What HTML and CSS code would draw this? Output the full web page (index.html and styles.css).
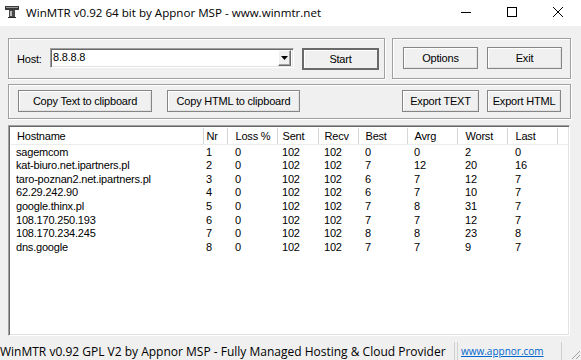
FILE: index.html
```html
<!DOCTYPE html>
<html>
<head>
<meta charset="utf-8">
<title>WinMTR</title>
<link rel="stylesheet" href="styles.css">
</head>
<body>
<div class="titlebar">
  <svg class="appicon" width="14" height="12" viewBox="0 0 14 12">
    <rect x="0" y="0" width="14" height="4" fill="#3a3a3a"/>
    <rect x="1" y="1" width="12" height="1" fill="#9a9a9a"/>
    <rect x="4" y="4" width="6" height="7" fill="#4a4a4a"/>
    <rect x="5" y="5" width="2" height="5" fill="#bdbdbd"/>
    <rect x="3" y="11" width="8" height="1" fill="#2a2a2a"/>
  </svg>
  <span class="title">WinMTR v0.92 64 bit by Appnor MSP - www.winmtr.net</span>
  <div class="winctl">
    <span class="ctl"><svg width="10" height="10" viewBox="0 0 10 10"><line x1="0" y1="5.5" x2="10" y2="5.5" stroke="#000" stroke-width="1"/></svg></span>
    <span class="ctl"><svg width="10" height="10" viewBox="0 0 10 10"><rect x="0.5" y="0.5" width="9" height="9" fill="none" stroke="#000" stroke-width="1"/></svg></span>
    <span class="ctl"><svg width="10" height="10" viewBox="0 0 10 10"><path d="M0 0L10 10M10 0L0 10" stroke="#000" stroke-width="1"/></svg></span>
  </div>
</div>
<div class="app">
  <div class="row1">
    <div class="group host-group">
      <span class="lbl">Host:</span>
      <div class="combo">
        <span class="combo-text">8.8.8.8</span>
        <span class="combo-btn"><svg width="7" height="4" viewBox="0 0 7 4"><path d="M0 0H7L3.5 4Z" fill="#000"/></svg></span>
      </div>
      <button class="btn btn-default start">Start</button>
    </div>
    <div class="group opt-group">
      <button class="btn opt">Options</button>
      <button class="btn opt">Exit</button>
    </div>
  </div>
  <div class="group row2">
    <button class="btn copy-text">Copy Text to clipboard</button>
    <button class="btn copy-html">Copy HTML to clipboard</button>
    <span class="spacer"></span>
    <button class="btn exp-text">Export TEXT</button>
    <button class="btn exp-html">Export HTML</button>
  </div>
  <div class="list">
    <table class="grid">
      <colgroup>
        <col class="c-host"><col class="c-nr"><col class="c-loss"><col class="c-sent"><col class="c-recv"><col class="c-best"><col class="c-avrg"><col class="c-worst"><col class="c-last"><col class="c-fill">
      </colgroup>
      <thead>
        <tr><th>Hostname</th><th>Nr</th><th>Loss %</th><th>Sent</th><th>Recv</th><th>Best</th><th>Avrg</th><th>Worst</th><th>Last</th><th></th></tr>
      </thead>
      <tbody>
        <tr><td>sagemcom</td><td>1</td><td>0</td><td>102</td><td>102</td><td>0</td><td>0</td><td>2</td><td>0</td><td></td></tr>
        <tr><td>kat-biuro.net.ipartners.pl</td><td>2</td><td>0</td><td>102</td><td>102</td><td>7</td><td>12</td><td>20</td><td>16</td><td></td></tr>
        <tr><td>taro-poznan2.net.ipartners.pl</td><td>3</td><td>0</td><td>102</td><td>102</td><td>6</td><td>7</td><td>12</td><td>7</td><td></td></tr>
        <tr><td>62.29.242.90</td><td>4</td><td>0</td><td>102</td><td>102</td><td>6</td><td>7</td><td>10</td><td>7</td><td></td></tr>
        <tr><td>google.thinx.pl</td><td>5</td><td>0</td><td>102</td><td>102</td><td>7</td><td>8</td><td>31</td><td>7</td><td></td></tr>
        <tr><td>108.170.250.193</td><td>6</td><td>0</td><td>102</td><td>102</td><td>7</td><td>7</td><td>12</td><td>7</td><td></td></tr>
        <tr><td>108.170.234.245</td><td>7</td><td>0</td><td>102</td><td>102</td><td>8</td><td>8</td><td>23</td><td>8</td><td></td></tr>
        <tr><td>dns.google</td><td>8</td><td>0</td><td>102</td><td>102</td><td>7</td><td>7</td><td>9</td><td>7</td><td></td></tr>
      </tbody>
    </table>
  </div>
</div>
<div class="statusbar">
  <span class="status-main">WinMTR v0.92 GPL V2 by Appnor MSP - Fully Managed Hosting &amp; Cloud Provider</span>
  <span class="status-link"><a href="#">www.appnor.com</a></span>
  <span class="grip">
    <svg width="12" height="12" viewBox="0 0 12 12">
      <path d="M11 3L3 11M11 7L7 11M11 11L11 11" stroke="#a0a0a0" stroke-width="1"/>
    </svg>
  </span>
</div>
</body>
</html>
```

FILE: styles.css
```css
* { box-sizing: border-box; }

html, body {
  margin: 0;
  padding: 0;
}

body {
  width: 581px;
  height: 360px;
  overflow: hidden;
  background: #f0f0f0;
  font-family: "Liberation Sans", Arial, sans-serif;
  font-size: 11px;
  color: #000;
  display: flex;
  flex-direction: column;
}

/* ---------- title bar ---------- */
.titlebar {
  height: 26px;
  background: #fff;
  display: flex;
  align-items: center;
  flex-shrink: 0;
}

.appicon {
  margin-left: 5px;
  margin-right: 7px;
  margin-top: -2px;
}

.title {
  font-family: "Open Sans", "Noto Sans", sans-serif;
  font-size: 11.6px;
  color: #000;
  margin-top: -2px;
}

.winctl {
  margin-left: auto;
  display: flex;
  height: 26px;
}

.ctl {
  width: 46px;
  height: 26px;
  display: flex;
  align-items: center;
  justify-content: center;
  margin-top: -1px;
}

/* ---------- client ---------- */
.app {
  padding: 12px 10px 0 8px;
  display: flex;
  flex-direction: column;
}

.group {
  border: 1px solid #a0a0a0;
  box-shadow: inset 1px 1px 0 #fff, 1px 1px 0 #fff;
}

.row1 {
  display: flex;
  gap: 7px;
  height: 41px;
}

.host-group {
  width: 377px;
  display: flex;
  align-items: center;
  padding-left: 8px;
  padding-top: 1px;
}

.lbl {
  width: 33px;
  letter-spacing: -0.2px;
  margin-top: -1px;
}

.combo {
  width: 244px;
  height: 20px;
  background: #fff;
  border-top: 1px solid #a0a0a0;
  border-left: 1px solid #a0a0a0;
  border-right: 1px solid #fff;
  border-bottom: 1px solid #fff;
  box-shadow: inset 1px 1px 0 #696969, inset -1px -1px 0 #e3e3e3;
  display: flex;
  align-items: center;
  padding: 0 2px 0 2px;
  margin-top: -2px;
}

.combo-text {
  flex: 1;
  letter-spacing: -0.2px;
  margin-top: -2px;
}

.combo-btn {
  width: 13px;
  height: 16px;
  background: #f0f0f0;
  border-top: 1px solid #fff;
  border-left: 1px solid #fff;
  border-right: 1px solid #696969;
  border-bottom: 1px solid #696969;
  box-shadow: inset -1px -1px 0 #a0a0a0;
  display: flex;
  align-items: center;
  justify-content: center;
}

.btn {
  font-family: "Liberation Sans", Arial, sans-serif;
  font-size: 11px;
  letter-spacing: -0.2px;
  color: #000;
  background: #f0f0f0;
  border: 1px solid #858585;
  box-shadow: inset 1px 1px 0 #fff, inset -1px -1px 0 #e3e3e3;
  height: 22px;
  padding: 0;
  margin: 0;
  border-radius: 0;
}

.btn-default {
  border: 1px solid #6a6a6a;
  box-shadow: inset 0 0 0 1px #6a6a6a, inset 2px 2px 0 #fff;
}

.start {
  width: 77px;
  margin-left: 8px;
}

.opt-group {
  width: 179px;
  display: flex;
  align-items: center;
  padding-left: 10px;
  gap: 9px;
  padding-top: 1px;
}

.opt {
  width: 75px;
  margin-top: -2px;
}

.row2 {
  margin-top: 5px;
  height: 35px;
  display: flex;
  align-items: flex-start;
  padding: 5px 9px 0 9px;
}

.copy-text { width: 134px; }
.copy-html { width: 133px; margin-left: 15px; }
.spacer { flex: 1; }
.exp-text { width: 77px; }
.exp-html { width: 74px; margin-left: 8px; }

/* ---------- list ---------- */
.list {
  margin-top: 6px;
  width: 562px;
  height: 211px;
  background: #fff;
  border-top: 1px solid #a0a0a0;
  border-left: 1px solid #a0a0a0;
  border-right: 1px solid #fff;
  border-bottom: 1px solid #fff;
  box-shadow: inset 1px 1px 0 #696969, inset -1px -1px 0 #e3e3e3;
  padding: 2px 2px 0 2px;
  overflow: hidden;
}

.grid {
  border-collapse: collapse;
  table-layout: fixed;
  width: 558px;
  letter-spacing: -0.2px;
}

.c-host { width: 192px; }
.c-nr { width: 24px; }
.c-loss { width: 50px; }
.c-sent { width: 41px; }
.c-recv { width: 40px; }
.c-best { width: 49px; }
.c-avrg { width: 50px; }
.c-worst { width: 50px; }
.c-last { width: 50px; }
.c-fill { width: 12px; }

.grid th {
  height: 16px;
  font-weight: normal;
  text-align: left;
  padding: 0;
  border-right: 1px solid #d6d6d6;
  border-bottom: 1px solid #ececec;
  white-space: nowrap;
  line-height: 14px;
}

.grid th:last-child { border-right: none; }

.grid td {
  height: 13.7px;
  line-height: 13px;
  padding: 0;
  white-space: nowrap;
  overflow: hidden;
}

.grid tbody tr:first-child td { padding-top: 1px; height: 14.7px; }

.grid th:nth-child(1) { padding-left: 6px; }
.grid td:nth-child(1) { padding-left: 5px; }
.grid th:nth-child(2), .grid td:nth-child(2) { padding-left: 3px; }
.grid th:nth-child(3), .grid td:nth-child(3) { padding-left: 8px; }
.grid th:nth-child(4), .grid td:nth-child(4) { padding-left: 5px; }
.grid th:nth-child(5), .grid td:nth-child(5) { padding-left: 6px; }
.grid th:nth-child(6), .grid td:nth-child(6) { padding-left: 7px; }
.grid th:nth-child(7), .grid td:nth-child(7) { padding-left: 7px; }
.grid th:nth-child(8), .grid td:nth-child(8) { padding-left: 8px; }
.grid th:nth-child(9), .grid td:nth-child(9) { padding-left: 8px; }

/* ---------- status bar ---------- */
.statusbar {
  margin-top: auto;
  height: 18px;
  display: flex;
  align-items: stretch;
  font-family: "Open Sans", "Noto Sans", sans-serif;
  font-size: 12px;
  flex-shrink: 0;
}

.status-main {
  width: 455px;
  padding-left: 0;
  white-space: nowrap;
  overflow: hidden;
  border-right: 1px solid #d0d0d0;
  line-height: 19px;
}

.status-link {
  margin-left: 2px;
  width: 105px;
  border-left: 1px solid #d0d0d0;
  border-right: 1px solid #d0d0d0;
  padding-left: 3px;
  line-height: 19px;
  white-space: nowrap;
  font-size: 10px;
}

.status-link a {
  color: #0066cc;
  text-decoration: underline;
}

.grip {
  flex: 1;
  display: flex;
  align-items: flex-end;
  justify-content: flex-end;
}
```
